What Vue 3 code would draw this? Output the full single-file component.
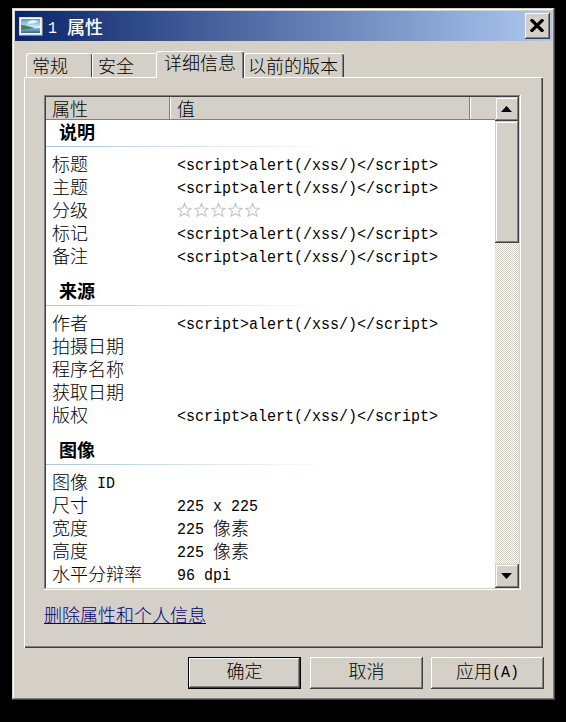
<script setup>
import { h } from 'vue'

const tabs = ['常规', '安全', '详细信息', '以前的版本']
const active = 2
const xss = '<script>alert(/xss/)<' + '/script>'
const groups = [
  {
    name: '说明',
    rows: [
      { label: '标题', value: xss },
      { label: '主题', value: xss },
      { label: '分级', stars: 5 },
      { label: '标记', value: xss },
      { label: '备注', value: xss },
    ],
  },
  {
    name: '来源',
    rows: [
      { label: '作者', value: xss },
      { label: '拍摄日期' },
      { label: '程序名称' },
      { label: '获取日期' },
      { label: '版权', value: xss },
    ],
  },
  {
    name: '图像',
    rows: [
      { label: '图像 ID' },
      { label: '尺寸', value: '225 x 225' },
      { label: '宽度', value: '225 像素' },
      { label: '高度', value: '225 像素' },
      { label: '水平分辩率', value: '96 dpi' },
    ],
  },
]

// Latin runs use a half-width monospace face, Chinese runs the full-width one.
const Mixed = (props) =>
  (props.text || '')
    .split(/([\x20-\x7e]+)/)
    .filter(Boolean)
    .map((run) => h('span', { class: /^[\x20-\x7e]/.test(run) ? 'latin' : 'han' }, run))
Mixed.props = ['text']
</script>

<template>
  <div class="desktop">
    <section class="window">
      <header class="titlebar">
        <svg class="picture" width="24" height="19" viewBox="0 0 24 19">
          <defs>
            <linearGradient id="sky" x1="0" y1="0" x2="0" y2="1">
              <stop offset="0" stop-color="#4f9be0" />
              <stop offset="1" stop-color="#e4f4fc" />
            </linearGradient>
            <linearGradient id="sea" x1="0" y1="0" x2="0" y2="1">
              <stop offset="0" stop-color="#8fc0d4" />
              <stop offset="1" stop-color="#28679c" />
            </linearGradient>
          </defs>
          <rect x="0.5" y="0.5" width="22" height="17" fill="#fff" stroke="#d8dce0" />
          <rect x="2" y="2" width="19" height="9" fill="url(#sky)" />
          <path d="M8 5l5-2 7 1-4 2-6 1z" fill="#e8f5fc" />
          <rect x="2" y="11" width="19" height="5" fill="url(#sea)" />
          <path d="M2 8l3 0 5 1.5 6 1.5-6 1-8 1z" fill="#4c8156" />
          <path d="M0 18.5h23.5V1" fill="none" stroke="#777f88" />
        </svg>
        <h1 class="title"><Mixed text="1 属性" /></h1>
        <button class="close" aria-label="关闭">
          <svg width="14" height="13" viewBox="0 0 14 13">
            <path d="M2 1.5L12 11.5M12 1.5L2 11.5" stroke="#000" stroke-width="3.2" stroke-linecap="square" />
          </svg>
        </button>
      </header>

      <nav class="tabs">
        <button
          v-for="(t, i) in tabs"
          :key="t"
          class="tab"
          :class="['tab-' + i, { active: i === active }]"
        >{{ t }}</button>
      </nav>

      <main class="pane">
        <div class="list">
          <div class="content">
            <div class="columns">
              <span class="col col-name">属性</span>
              <span class="col col-value">值</span>
              <span class="col col-rest"></span>
            </div>
            <div class="rows">
              <section v-for="g in groups" :key="g.name" class="group">
                <h2 class="group-name">{{ g.name }}</h2>
                <div v-for="r in g.rows" :key="r.label" class="row">
                  <span class="label"><Mixed :text="r.label" /></span>
                  <span v-if="r.stars" class="stars">
                    <svg v-for="n in r.stars" :key="n" width="17" height="16" viewBox="0 0 17 16">
                      <path
                        d="M7.5 1.5L9.3 6 14 6.4 10.6 9.4 12 14.2 7.5 11.7 3 14.2 4.4 9.4 1 6.4 5.7 6Z"
                        fill="#fff"
                        stroke="#c4c4c4"
                        stroke-width="1.1"
                      />
                    </svg>
                  </span>
                  <span v-else class="value"><Mixed :text="r.value" /></span>
                </div>
              </section>
            </div>
          </div>
          <div class="scrollbar">
            <button class="arrow raised">
              <svg width="11" height="6" viewBox="0 0 11 6"><path d="M0 6L5.5 0L11 6Z" /></svg>
            </button>
            <div class="thumb raised"></div>
            <div class="track"></div>
            <button class="arrow raised">
              <svg width="11" height="6" viewBox="0 0 11 6"><path d="M0 0L5.5 6L11 0Z" /></svg>
            </button>
          </div>
        </div>
        <a class="link">删除属性和个人信息</a>
      </main>

      <footer class="actions">
        <button class="push default"><span>确定</span></button>
        <button class="push"><span>取消</span></button>
        <button class="push apply"><span><Mixed text="应用(A)" /></span></button>
      </footer>
    </section>
  </div>
</template>

<style>
body {
  margin: 0;
  background: #000;
}
.latin {
  display: inline-block;
  font-family: 'Liberation Mono', monospace;
  font-size: 15px;
  line-height: 18px;
  vertical-align: 1px;
  white-space: pre;
  transform: scaleY(1.16);
  transform-origin: 0 14px;
}
</style>

<style scoped>
* {
  box-sizing: border-box;
}
.desktop {
  width: 566px;
  height: 722px;
  padding: 8px 0 0 12px;
  background: #000;
  overflow: hidden;
  font-family: 'Noto Sans CJK SC', sans-serif;
  font-size: 18px;
  font-weight: 300;
  line-height: 23px;
  color: #000;
}
button {
  margin: 0;
  padding: 0;
  border: 0;
  background: #d4d0c8;
  font: inherit;
  color: inherit;
}
.window {
  display: flex;
  flex-direction: column;
  width: 543px;
  height: 692px;
  padding: 3px;
  background: #d4d0c8;
  box-shadow: inset -1px -1px #404040, inset 1px 1px #d4d0c8, inset -2px -2px #808080, inset 2px 2px #fff;
}
.titlebar {
  display: flex;
  align-items: center;
  height: 30px;
  padding: 0 2px 0 4px;
  background: linear-gradient(90deg, #0a246a, #adc9f0);
}
.title {
  flex: 1;
  margin: 0 0 0 5px;
  font-size: 18px;
  font-weight: 500;
  line-height: 30px;
  color: #fff;
}
.title :deep(.han) {
  margin-left: 1px;
}
.close {
  display: flex;
  align-items: center;
  justify-content: center;
  width: 25px;
  height: 26px;
  padding: 0 1px 1px 0;
  box-shadow: inset -1px -1px #404040, inset 1px 1px #fff, inset -2px -2px #808080;
}
.tabs {
  display: flex;
  align-items: flex-end;
  height: 36px;
  padding-left: 11px;
}
.tab {
  height: 24px;
  padding: 0 0 1px 5px;
  text-align: left;
  white-space: nowrap;
  line-height: 21px;
  border-top: 1px solid #fff;
  border-left: 1px solid #fff;
  border-radius: 3px 2px 0 0;
}
.tab-0 {
  width: 66px;
  box-shadow: inset -1px 0 #404040;
}
.tab-1 {
  width: 64px;
}
.tab-2 {
  width: 88px;
}
.tab-3 {
  width: 100px;
  padding-left: 3px;
  box-shadow: inset -1px 0 #404040, inset -2px 0 #808080;
}
.tab.active {
  position: relative;
  z-index: 1;
  height: 27px;
  margin-bottom: -1px;
  padding: 0 0 5px 7px;
  box-shadow: inset -1px 0 #404040, inset -2px 0 #808080;
}
.pane {
  width: 519px;
  height: 571px;
  margin-left: 9px;
  padding: 18px 0 0 20px;
  box-shadow: inset 1px 1px #fff, inset -1px -1px #404040, inset -2px -2px #808080;
}
.list {
  display: flex;
  width: 477px;
  height: 495px;
  padding: 2px;
  background: #fff;
  box-shadow: inset -1px -1px #fff, inset 1px 1px #808080, inset -2px -2px #d4d0c8, inset 2px 2px #404040;
}
.content {
  width: 449px;
  overflow: hidden;
}
.columns {
  display: flex;
  height: 23px;
  background: #d4d0c8;
  border-bottom: 1px solid #808080;
}
.col {
  padding-left: 6px;
  line-height: 22px;
  border-right: 1px solid #808080;
}
.col-name {
  width: 124px;
}
.col-value {
  width: 300px;
  padding-left: 6px;
  border-left: 1px solid #fff;
}
.col-rest {
  flex: 1;
  border-left: 1px solid #fff;
  border-right: 0;
}
.rows {
  height: 468px;
  overflow: hidden;
}
.group:first-child {
  margin-top: -11px;
}
.group-name {
  height: 38px;
  margin: 0 0 6px;
  padding: 11px 0 0 13px;
  font-size: 18px;
  font-weight: 700;
  line-height: 22px;
  background: linear-gradient(90deg, #a9c3ea, #fff 290px) bottom left / 100% 1px no-repeat;
}
.row {
  display: flex;
  height: 23px;
  padding-left: 6px;
  line-height: 20px;
  white-space: nowrap;
}
.label {
  width: 125px;
}
.stars {
  display: flex;
  align-items: center;
  padding-bottom: 1px;
}
.scrollbar {
  display: flex;
  flex-direction: column;
  width: 24px;
}
.raised {
  background: #d4d0c8;
  box-shadow: inset -1px -1px #404040, inset 1px 1px #d4d0c8, inset -2px -2px #808080, inset 2px 2px #fff;
}
.arrow {
  display: flex;
  align-items: center;
  justify-content: center;
  height: 24px;
  padding-right: 1px;
}
.thumb {
  height: 122px;
}
.track {
  flex: 1;
  background: repeating-conic-gradient(#fff 0 25%, #d4d0c8 0 50%) 0 0 / 2px 2px;
}
.link {
  display: block;
  width: 162px;
  height: 20px;
  margin-top: 14px;
  line-height: 20px;
  color: #000080;
  border-bottom: 1px solid #000080;
}
.actions {
  display: flex;
  gap: 8px;
  margin-top: 9px;
  padding-left: 173px;
}
.push {
  width: 113px;
  height: 32px;
  line-height: 27px;
  padding-bottom: 5px;
  box-shadow: inset -1px -1px #404040, inset 1px 1px #fff, inset -2px -2px #808080;
}
.push.default {
  margin-right: 1px;
  border: 1px solid #000;
  line-height: 25px;
}
</style>
